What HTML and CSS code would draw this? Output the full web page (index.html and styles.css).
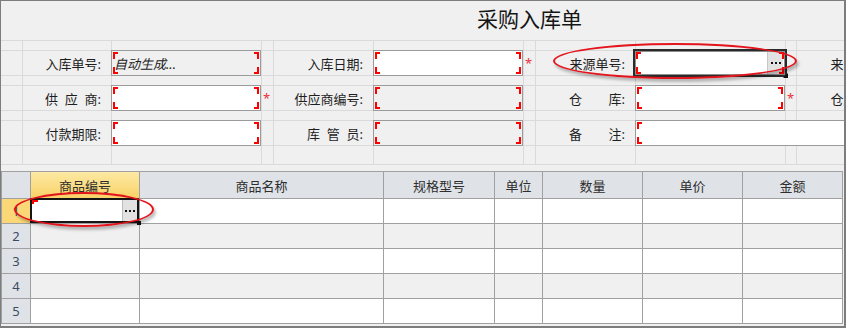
FILE: index.html
```html
<!DOCTYPE html>
<html lang="zh-CN">

<head>
    <meta charset="UTF-8">
    <title>采购入库单</title>
    <link rel="stylesheet" href="styles.css">
</head>

<body>
    <div class="win">
        <div class="form">
            <h1 class="title">采购入库单</h1>
            <div class="lay">
                <!-- 空行 -->
                <div></div><div></div><div></div><div></div><div></div><div></div><div></div><div></div><div></div><div></div><div></div><div></div><div></div>

                <div></div>
                <div class="lbl">入库单号:</div>
                <div class="inp off"><span class="auto">自动生成...</span></div>
                <div></div>
                <div class="lbl">入库日期:</div>
                <div class="inp"></div>
                <div class="req">*</div>
                <div class="lbl">来源单号:</div>
                <div class="inp focus"><span class="dots"><svg width="10" height="2" viewBox="0 0 10 2"><rect x="0" y="0" width="2" height="2"/><rect x="4" y="0" width="2" height="2"/><rect x="8" y="0" width="2" height="2"/></svg></span></div>
                <div></div>
                <div class="lbl">来源类型:</div>
                <div class="inp"></div>
                <div></div>

                <div></div><div></div><div></div><div></div><div></div><div></div><div></div><div></div><div></div><div></div><div></div><div></div><div></div>

                <div></div>
                <div class="lbl"><span class="jst"><span>供</span><span>应</span><span>商:</span></span></div>
                <div class="inp"></div>
                <div class="req">*</div>
                <div class="lbl">供应商编号:</div>
                <div class="inp off"></div>
                <div></div>
                <div class="lbl"><span class="jst"><span>仓</span><span>库:</span></span></div>
                <div class="inp"></div>
                <div class="req">*</div>
                <div class="lbl">仓库名称:</div>
                <div class="inp"></div>
                <div></div>

                <div></div><div></div><div></div><div></div><div></div><div></div><div></div><div></div><div></div><div></div><div></div><div></div><div></div>

                <div></div>
                <div class="lbl">付款期限:</div>
                <div class="inp"></div>
                <div></div>
                <div class="lbl"><span class="jst"><span>库</span><span>管</span><span>员:</span></span></div>
                <div class="inp off"></div>
                <div></div>
                <div class="lbl"><span class="jst"><span>备</span><span>注:</span></span></div>
                <div class="inp wide"></div>

                <div></div><div></div><div></div><div></div><div></div><div></div><div></div><div></div><div></div><div></div><div></div><div></div><div></div>
            </div>
        </div>

        <div class="grid">
            <div class="hd"></div>
            <div class="hd sel">商品编号</div>
            <div class="hd">商品名称</div>
            <div class="hd">规格型号</div>
            <div class="hd">单位</div>
            <div class="hd">数量</div>
            <div class="hd">单价</div>
            <div class="hd">金额</div>

            <div class="rn sel">1</div>
            <div class="ed"><span class="dots"><svg width="10" height="2" viewBox="0 0 10 2"><rect x="0" y="0" width="2" height="2"/><rect x="4" y="0" width="2" height="2"/><rect x="8" y="0" width="2" height="2"/></svg></span></div>
            <div class="cell"></div><div class="cell"></div><div class="cell"></div><div class="cell"></div><div class="cell"></div><div class="cell"></div>

            <div class="rn">2</div>
            <div class="cell alt"></div><div class="cell alt"></div><div class="cell alt"></div><div class="cell alt"></div><div class="cell alt"></div><div class="cell alt"></div><div class="cell alt"></div>

            <div class="rn">3</div>
            <div class="cell"></div><div class="cell"></div><div class="cell"></div><div class="cell"></div><div class="cell"></div><div class="cell"></div><div class="cell"></div>

            <div class="rn">4</div>
            <div class="cell alt"></div><div class="cell alt"></div><div class="cell alt"></div><div class="cell alt"></div><div class="cell alt"></div><div class="cell alt"></div><div class="cell alt"></div>

            <div class="rn">5</div>
            <div class="cell"></div><div class="cell"></div><div class="cell"></div><div class="cell"></div><div class="cell"></div><div class="cell"></div><div class="cell"></div>
        </div>

        <!-- 红圈标注 -->
        <div class="mark mark-src"></div>
        <div class="mark mark-cell"></div>
    </div>
</body>

</html>
```

FILE: styles.css
```css
* {
    margin: 0;
    padding: 0;
    box-sizing: border-box;
}

body {
    font-family: "Noto Sans", "Noto Sans CJK SC", sans-serif;
    font-size: 13px;
    color: #1e1e1e;
}

.win {
    position: relative;
    width: 846px;
    height: 328px;
    border: 1px solid #7d7d7d;
    border-right-width: 2px;
    border-bottom-width: 2px;
    background-color: #f0f0f0;
    overflow: hidden;
}

.form {
    width: 1057px;
}

.title {
    height: 40px;
    line-height: 37px;
    text-align: center;
    font-size: 21px;
    font-weight: normal;
    color: #151515;
    border-bottom: 1px solid #dadada;
}

.lay {
    display: grid;
    grid-template-columns: 21px 88px 149px 11px 99px 149px 11px 99px 149px 10px 99px 149px 11px;
    grid-template-rows: 9px 24px 9px 24px 9px 24px 18px;
    gap: 1px;
    background-color: #dadada;
    border-bottom: 1px solid #dadada;
}

.lay > div {
    background-color: #f0f0f0;
}

.lbl {
    display: flex;
    align-items: center;
    justify-content: flex-end;
    padding-right: 10px;
    white-space: nowrap;
}

.jst {
    display: flex;
    justify-content: space-between;
    width: 56px;
}

.req {
    padding-left: 1px;
    line-height: 24px;
    color: #e8303a;
}

.lay .inp {
    position: relative;
    margin: -1px 0 -1px -1px;
    border: 1px solid #9b9b9b;
    background-color: #fff;
    display: flex;
    align-items: center;
}

.lay .inp.off {
    background-color: #f0f0f0;
}

.lay .inp.wide {
    grid-column: span 5;
}

/* 必填框的红色角标 */
.inp::before {
    content: "";
    position: absolute;
    top: 1px;
    right: 1px;
    bottom: 1px;
    left: 1px;
    background:
        linear-gradient(#f00, #f00) left top / 5px 2px no-repeat,
        linear-gradient(#f00, #f00) left top / 2px 7px no-repeat,
        linear-gradient(#f00, #f00) right top / 5px 2px no-repeat,
        linear-gradient(#f00, #f00) right top / 2px 7px no-repeat,
        linear-gradient(#f00, #f00) left bottom / 5px 2px no-repeat,
        linear-gradient(#f00, #f00) left bottom / 2px 7px no-repeat,
        linear-gradient(#f00, #f00) right bottom / 5px 2px no-repeat,
        linear-gradient(#f00, #f00) right bottom / 2px 7px no-repeat;
}

.auto {
    padding-left: 2px;
    font-style: italic;
    color: #222;
}

.lay .inp.focus {
    margin: -2px -2px -2px -3px;
    border: 2px solid #2a2a2a;
    box-shadow: inset 0 0 0 1px #8c8c8c;
    justify-content: flex-end;
    align-items: stretch;
}

.inp.focus .dots {
    margin: 1px 2px 1px 0;
}

.inp.focus::after {
    content: "";
    position: absolute;
    right: -3px;
    bottom: -3px;
    width: 5px;
    height: 5px;
    background-color: #111;
    clip-path: polygon(100% 0, 100% 100%, 0 100%);
}

.dots {
    display: flex;
    align-items: center;
    justify-content: center;
    width: 16px;
    background-color: #e2e2e2;
    border-left: 1px solid #c6c6c6;
}

.dots svg {
    fill: #111;
}

.grid {
    display: grid;
    grid-template-columns: 28px 108px 243px 110px 47px 99px 99px 99px;
    grid-template-rows: 26px repeat(5, 24px);
    gap: 1px;
    width: 842px;
    margin-top: 6px;
    border: 1px solid #a0a0a0;
    background-color: #a0a0a0;
}

.hd {
    display: flex;
    align-items: center;
    justify-content: center;
    background-color: #dfe3e8;
    color: #2e2e2e;
}

.hd.sel {
    background: linear-gradient(#fde9a4, #f8d267);
}

.rn {
    display: flex;
    align-items: center;
    justify-content: center;
    background-color: #dfe3e8;
    color: #3a4b62;
    font-size: 13px;
}

.rn.sel {
    background-color: #fbd877;
}

.cell {
    background-color: #fff;
}

.cell.alt {
    background-color: #f0f0f0;
}

.ed {
    position: relative;
    display: flex;
    justify-content: flex-end;
    margin: -1px 0 0 -1px;
    border: 2px solid #151515;
    background-color: #fff;
}

.ed::before {
    content: "";
    position: absolute;
    top: 0;
    left: 0;
    width: 6px;
    height: 4px;
    background:
        linear-gradient(#f00, #f00) left top / 6px 2px no-repeat,
        linear-gradient(#f00, #f00) left top / 2px 4px no-repeat;
}

.ed::after {
    content: "";
    position: absolute;
    right: -4px;
    bottom: -4px;
    width: 4px;
    height: 4px;
    background-color: #111;
}

.ed .dots {
    width: 15px;
    border-left-color: #bcbcbc;
}

.mark {
    position: absolute;
    border: 2px solid #e4141c;
    border-radius: 50%;
    box-shadow: 2px 3px 3px rgba(0, 0, 0, .25);
    pointer-events: none;
}

.mark-src {
    left: 552px;
    top: 42px;
    width: 244px;
    height: 36px;
}

.mark-cell {
    left: 13px;
    top: 191px;
    width: 140px;
    height: 35px;
}
```
